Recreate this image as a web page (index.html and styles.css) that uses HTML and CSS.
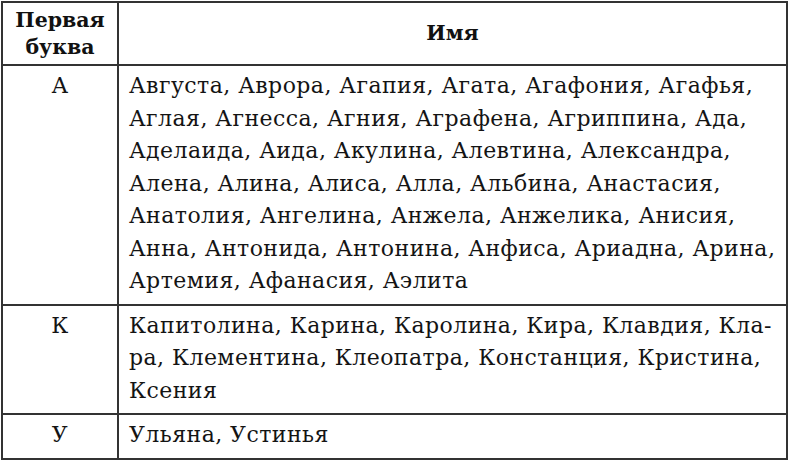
FILE: index.html
```html
<!DOCTYPE html>
<html lang="ru">
<head>
<meta charset="utf-8">
<link rel="stylesheet" href="styles.css">
</head>
<body>
<table class="names">
  <thead>
    <tr>
      <th class="col-letter">Первая<br>буква</th>
      <th class="col-names">Имя</th>
    </tr>
  </thead>
  <tbody>
    <tr class="row-a">
      <td class="letter">А</td>
      <td class="list">Августа, Аврора, Агапия, Агата, Агафония, Агафья,<br>Аглая, Агнесса, Агния, Аграфена, Агриппина, Ада,<br>Аделаида, Аида, Акулина, Алевтина, Александра,<br>Алена, Алина, Алиса, Алла, Альбина, Анастасия,<br>Анатолия, Ангелина, Анжела, Анжелика, Анисия,<br>Анна, Антонида, Антонина, Анфиса, Ариадна, Арина,<br>Артемия, Афанасия, Аэлита</td>
    </tr>
    <tr class="row-k">
      <td class="letter">К</td>
      <td class="list">Капитолина, Карина, Каролина, Кира, Клавдия, Кла-<br>ра, Клементина, Клеопатра, Констанция, Кристина,<br>Ксения</td>
    </tr>
    <tr class="row-u">
      <td class="letter">У</td>
      <td class="list">Ульяна, Устинья</td>
    </tr>
  </tbody>
</table>
</body>
</html>
```

FILE: styles.css
```css
html, body {
  margin: 0;
  padding: 0;
  background: #ffffff;
}

body {
  padding: 1px 2px 0 1px;
  font-family: "DejaVu Serif", "Liberation Serif", serif;
  color: #141414;
}

.names {
  border-collapse: collapse;
  width: 787px;
  table-layout: fixed;
}

.names th,
.names td {
  border: 2px solid #333333;
  padding: 0;
}

.col-letter {
  width: 114px;
}

.names th {
  height: 61px;
  font-size: 20.5px;
  font-weight: bold;
  line-height: 27px;
  text-align: center;
  vertical-align: middle;
  color: #111111;
}

.names td {
  font-size: 22px;
  line-height: 32.5px;
  letter-spacing: 0.45px;
  vertical-align: top;
  padding-top: 4px;
  padding-bottom: 6px;
}

.names .letter {
  text-align: center;
}

.names .list {
  white-space: nowrap;
  padding-left: 10px;
}
```
